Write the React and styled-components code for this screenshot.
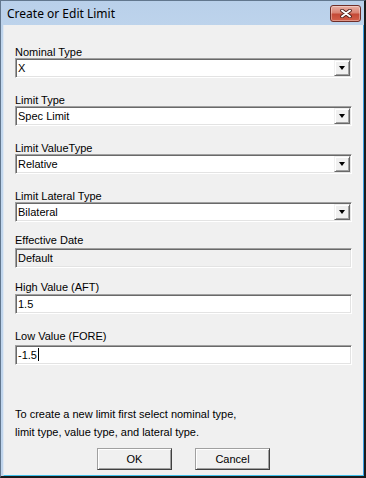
import React from 'react'
import styled, { createGlobalStyle } from 'styled-components'

const Global = createGlobalStyle`
  html, body {
    margin: 0;
    padding: 0;
    background: #1b1b1b;
  }
`

const Window = styled.div`
  width: 366px;
  height: 478px;
  box-sizing: border-box;
  display: flex;
  flex-direction: column;
  background: linear-gradient(#b9d0ea, #c3d8ee 60px, #bfd4ec);
  border-style: solid;
  border-width: 1px 2px 2px 1px;
  border-color: #62778e #1b1b1b #1b1b1b #62778e;
  padding-left: 2px;
`

const TitleBar = styled.div`
  height: 24px;
  flex: none;
  display: flex;
  align-items: center;
  justify-content: space-between;
  padding: 1px 3px 0 4px;
  box-sizing: border-box;
`

const Title = styled.span`
  font: 12px "Noto Sans", "Open Sans", sans-serif;
  color: #000;
`

const CloseButton = styled.div`
  width: 31px;
  height: 17px;
  box-sizing: border-box;
  border: 1px solid #6f2e28;
  border-radius: 3px;
  background: linear-gradient(#e9b0a5, #d98474 45%, #c44a37 55%, #d3604a);
  box-shadow: inset 0 0 0 1px rgba(255, 255, 255, 0.35);
  display: flex;
  align-items: center;
  justify-content: center;
`

const Client = styled.div`
  flex: 1;
  display: flex;
  flex-direction: column;
  background: #f0f0f0;
  border-left: 1px solid #dfe8f2;
  border-right: 1px solid #3a9fe2;
  border-bottom: 1px solid #3ec0ea;
  padding: 21px 11px 0 11px;
  font: 11px "Liberation Sans", Arial, sans-serif;
  color: #000;
`

const Field = styled.div`
  display: flex;
  flex-direction: column;
  margin-top: ${p => p.$gap || 0}px;
`

const Label = styled.div`
  line-height: 12px;
  height: 12px;
  margin-bottom: ${p => p.$space || 0}px;
`

const Box = styled.div`
  height: 20px;
  box-sizing: border-box;
  display: flex;
  align-items: center;
  border: 1px solid;
  border-color: #a0a0a0 #fff #fff #a0a0a0;
  box-shadow: inset 1px 1px #696969, inset -1px -1px #e3e3e3;
  background: ${p => (p.$disabled ? '#f0f0f0' : '#fff')};
  padding: 0 2px 0 2px;
`

const Value = styled.span`
  flex: 1;
  line-height: 14px;
`

const Caret = styled.span`
  display: inline-block;
  width: 1px;
  height: 13px;
  background: #000;
  vertical-align: -2px;
  margin-left: 1px;
`

const DropButton = styled.div`
  width: 16px;
  height: 16px;
  box-sizing: border-box;
  margin-right: -1px;
  border: 1px solid;
  border-color: #f0f0f0 #696969 #696969 #f0f0f0;
  box-shadow: inset 1px 1px #fff, inset -1px -1px #a0a0a0;
  background: #f0f0f0;
  display: flex;
  align-items: center;
  justify-content: center;
`

const Arrow = styled.div`
  width: 0;
  height: 0;
  border-left: 3.5px solid transparent;
  border-right: 3.5px solid transparent;
  border-top: 4px solid #000;
`

const Note = styled.div`
  margin-top: 40px;
  line-height: 18px;
`

const ButtonRow = styled.div`
  display: flex;
  justify-content: center;
  gap: 23px;
  margin-top: 7px;
`

const Button = styled.div`
  width: 75px;
  height: 22px;
  box-sizing: border-box;
  display: flex;
  align-items: center;
  justify-content: center;
  border: 1px solid;
  border-color: #a0a0a0 #404040 #404040 #a0a0a0;
  box-shadow: inset 1px 1px #fff, inset -1px -1px #a0a0a0;
  background: #f0f0f0;
  font: 11px "Liberation Sans", Arial, sans-serif;
`

const Select = ({ value }) => (
  <Box>
    <Value>{value}</Value>
    <DropButton>
      <Arrow />
    </DropButton>
  </Box>
)

const fields = [
  { label: 'Nominal Type', value: 'X', gap: 0 },
  { label: 'Limit Type', value: 'Spec Limit', gap: 16 },
  { label: 'Limit ValueType', value: 'Relative', gap: 16 },
  { label: 'Limit Lateral Type', value: 'Bilateral', gap: 16 }
]

export default function App() {
  return (
    <>
      <Global />
      <Window>
        <TitleBar>
          <Title>Create or Edit Limit</Title>
          <CloseButton>
            <svg width="12" height="9" viewBox="0 0 12 9">
              <path d="M2 1.5 L10 7.5 M10 1.5 L2 7.5" stroke="#4a1c18" strokeWidth="3.6" strokeLinecap="round" />
              <path d="M2 1.5 L10 7.5 M10 1.5 L2 7.5" stroke="#fff" strokeWidth="2" strokeLinecap="round" />
            </svg>
          </CloseButton>
        </TitleBar>
        <Client>
          {fields.map(f => (
            <Field key={f.label} $gap={f.gap}>
              <Label>{f.label}</Label>
              <Select value={f.value} />
            </Field>
          ))}
          <Field $gap={12}>
            <Label $space={2}>Effective Date</Label>
            <Box $disabled>
              <Value>Default</Value>
            </Box>
          </Field>
          <Field $gap={13}>
            <Label $space={1}>High Value (AFT)</Label>
            <Box>
              <Value>1.5</Value>
            </Box>
          </Field>
          <Field $gap={16}>
            <Label $space={3}>Low Value (FORE)</Label>
            <Box>
              <Value>
                -1.5
                <Caret />
              </Value>
            </Box>
          </Field>
          <Note>
            To create a new limit first select nominal type,
            <br />
            limit type, value type, and lateral type.
          </Note>
          <ButtonRow>
            <Button>OK</Button>
            <Button>Cancel</Button>
          </ButtonRow>
        </Client>
      </Window>
    </>
  )
}
